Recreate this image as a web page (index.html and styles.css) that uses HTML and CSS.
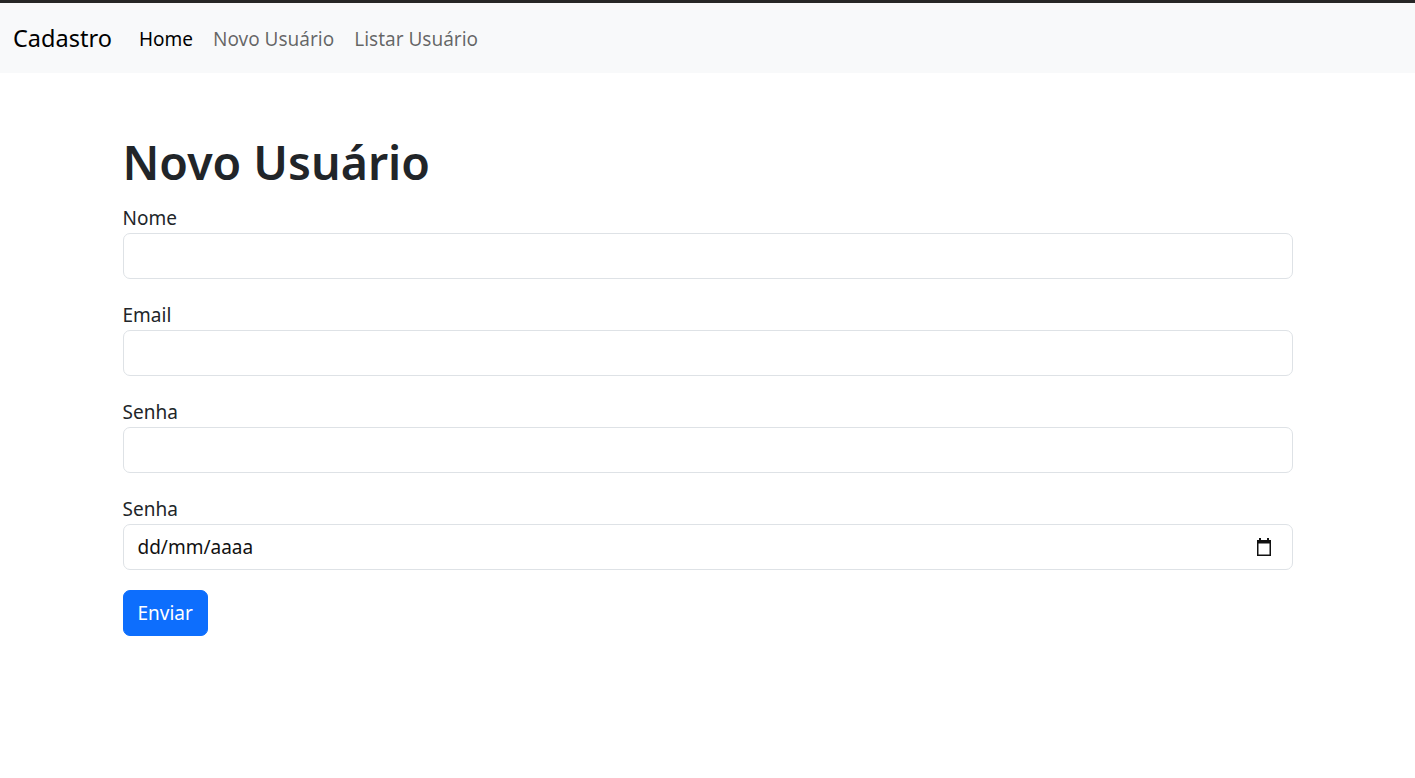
FILE: index.html
```html
<!DOCTYPE html>
<html lang="pt-BR">
<head>
<meta charset="utf-8">
<title>Cadastro</title>
<link rel="stylesheet" href="styles.css">
</head>
<body>
<nav class="navbar">
  <div class="nav-inner">
    <a class="brand" href="#">Cadastro</a>
    <ul class="nav-links">
      <li><a class="nav-link active" href="#">Home</a></li>
      <li><a class="nav-link" href="#">Novo Usuário</a></li>
      <li><a class="nav-link" href="#">Listar Usuário</a></li>
    </ul>
  </div>
</nav>
<main class="container">
  <h1 class="title">Novo Usuário</h1>
  <form class="form">
    <div class="group">
      <label class="label" for="nome">Nome</label>
      <input class="control" id="nome" type="text">
    </div>
    <div class="group">
      <label class="label" for="email">Email</label>
      <input class="control" id="email" type="email">
    </div>
    <div class="group">
      <label class="label" for="senha">Senha</label>
      <input class="control" id="senha" type="password">
    </div>
    <div class="group">
      <label class="label" for="data">Senha</label>
      <div class="control date-control">
        <span class="date-text" id="data">dd/mm/aaaa</span>
        <svg class="cal-icon" width="16" height="18" viewBox="0 0 16 18" aria-hidden="true">
          <rect x="3" y="0" width="2" height="4" fill="#111"/>
          <rect x="11" y="0" width="2" height="4" fill="#111"/>
          <rect x="1" y="2" width="14" height="3.5" fill="#111"/>
          <rect x="1.75" y="3" width="12.5" height="14.25" fill="none" stroke="#111" stroke-width="1.5"/>
        </svg>
      </div>
    </div>
    <button class="btn" type="button">Enviar</button>
  </form>
</main>
</body>
</html>
```
FILE: styles.css
```css
* { box-sizing: border-box; }
html, body { margin: 0; padding: 0; }
body {
  font-family: "Noto Sans", "Open Sans", sans-serif;
  font-size: 20px;
  line-height: 1.5;
  color: #212529;
  background: #fff;
  border-top: 3px solid #262626;
}
.navbar {
  background: #f8f9fa;
  height: 70px;
  display: flex;
  align-items: center;
}
.nav-inner {
  display: flex;
  align-items: center;
  padding: 2px 15px 0 13px;
}
.brand {
  font-size: 23.5px;
  color: #000;
  text-decoration: none;
  margin-right: 17px;
  line-height: 1.5;
}
.nav-links {
  list-style: none;
  margin: 0;
  padding: 0;
  display: flex;
}
.nav-link {
  display: block;
  padding: 0 10px;
  font-size: 19px;
  color: rgba(0,0,0,.6);
  text-decoration: none;
}
.nav-link.active { color: #000; }
.container {
  width: 1170px;
  margin: 0 auto;
  padding-top: 62px;
}
.title {
  font-size: 46.5px;
  font-weight: 560;
  line-height: 1.2;
  margin: 0 0 12px;
  color: #212529;
}
.group { margin-bottom: 21px; }
.label { display: block; font-size: 19px; line-height: 30px; }
.control {
  display: block;
  width: 100%;
  height: 46px;
  padding: 0 14px;
  font: inherit;
  font-size: 19px;
  color: #212529;
  border: 1px solid #dee2e6;
  border-radius: 7px;
  background: #fff;
}
.date-control {
  display: flex;
  align-items: center;
  justify-content: space-between;
  padding: 0 20px 0 14px;
}
.date-text { color: #111; }
.cal-icon { display: block; }
.btn {
  display: block;
  height: 46px;
  padding: 0 14px;
  font: inherit;
  font-size: 19px;
  color: #fff;
  background: #0d6efd;
  border: 1px solid #0d6efd;
  border-radius: 7px;
  margin-top: -1px;
}
```
